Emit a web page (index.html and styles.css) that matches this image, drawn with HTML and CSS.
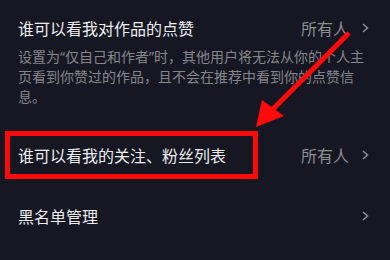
FILE: index.html
```html
<!DOCTYPE html>
<html lang="zh-CN">
<head>
<meta charset="utf-8">
<link rel="stylesheet" href="styles.css">
</head>
<body>
<div class="screen">
  <section class="item item-desc">
    <div class="row-head">
      <span class="title">谁可以看我对作品的点赞</span>
      <span class="right"><span class="value">所有人</span><svg class="chev" viewBox="0 0 7 10" width="7" height="10"><path d="M1 1 L5.5 5 L1 9" fill="none" stroke="#8d8e94" stroke-width="1.5"/></svg></span>
    </div>
    <p class="desc">设置为“仅自己和作者”时，其他用户将无法从你的个人主页看到你赞过的作品，且不会在推荐中看到你的点赞信息。</p>
  </section>
  <section class="item row">
    <span class="title">谁可以看我的关注、粉丝列表</span>
    <span class="right"><span class="value">所有人</span><svg class="chev" viewBox="0 0 7 10" width="7" height="10"><path d="M1 1 L5.5 5 L1 9" fill="none" stroke="#8d8e94" stroke-width="1.5"/></svg></span>
  </section>
  <section class="item row">
    <span class="title">黑名单管理</span>
    <span class="right"><svg class="chev" viewBox="0 0 7 10" width="7" height="10"><path d="M1 1 L5.5 5 L1 9" fill="none" stroke="#8d8e94" stroke-width="1.5"/></svg></span>
  </section>
  <div class="highlight"></div>
  <svg class="arrow" viewBox="0 0 390 260" width="390" height="260">
    <line x1="349" y1="33" x2="270" y2="112" stroke="#ff0a0a" stroke-width="5"/>
    <polygon points="256,127 262,100 284,116" fill="#ff0a0a"/>
  </svg>
</div>
</body>
</html>
```
FILE: styles.css
```css
html, body {
  margin: 0;
  padding: 0;
  background: #161722;
}
.screen {
  position: relative;
  width: 390px;
  height: 260px;
  overflow: hidden;
  background: #161722;
  font-family: "Noto Sans CJK SC", "Noto Sans", sans-serif;
  color: #ececee;
}
.item {
  padding: 0 21px 0 18px;
}
.item-desc {
  padding-top: 16px;
  padding-bottom: 17px;
}
.row-head, .row {
  display: flex;
  align-items: center;
  justify-content: space-between;
}
.row-head {
  height: 24px;
}
.row {
  height: 61px;
}
.title {
  font-size: 16px;
  line-height: 24px;
  color: #ececee;
}
.right {
  display: flex;
  align-items: center;
  gap: 13px;
}
.value {
  font-size: 16px;
  line-height: 24px;
  color: #8d8e94;
}
.chev {
  display: block;
}
.desc {
  margin: 7px 0 0;
  width: 348px;
  font-family: "Noto Sans", "Noto Sans CJK SC", sans-serif;
  font-size: 14px;
  line-height: 20px;
  color: #85868c;
}
.highlight {
  position: absolute;
  left: 5px;
  top: 131px;
  width: 243px;
  height: 38px;
  border: 5px solid #ff0a0a;
}
.arrow {
  position: absolute;
  left: 0;
  top: 0;
}
```
